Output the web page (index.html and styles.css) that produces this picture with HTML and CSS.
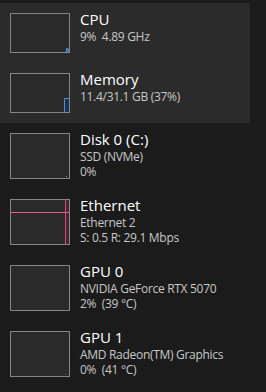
FILE: index.html
```html
<!DOCTYPE html>
<html>
<head>
<meta charset="utf-8">
<link rel="stylesheet" href="styles.css">
</head>
<body>
<div class="page">
  <div class="list">
    <div class="panel">
      <div class="row short">
        <div class="graph">
          <svg viewBox="0 0 58 38" width="58" height="38"><path d="M55 38 L56 34 L58 36 L58 38 Z" fill="#2a6fa8"/><path d="M55 38 L56 34 L58 36" fill="none" stroke="#4aa3e8" stroke-width="1"/></svg>
        </div>
        <div class="info">
          <div class="title">CPU</div>
          <div class="sub">9%&nbsp; 4.89 GHz</div>
        </div>
      </div>
      <div class="row short">
        <div class="graph">
          <svg viewBox="0 0 58 38" width="58" height="38"><rect x="53" y="24" width="5" height="14" fill="#1c3350"/><path d="M53.5 38 V24.5 H58" fill="none" stroke="#4b8fd6" stroke-width="1"/></svg>
        </div>
        <div class="info">
          <div class="title">Memory</div>
          <div class="sub">11.4/31.1 GB (37%)</div>
        </div>
      </div>
    </div>
    <div class="row">
      <div class="graph tall">
        <svg viewBox="0 0 58 44" width="58" height="44"><rect x="55" y="42" width="1" height="1" fill="#6aa83a"/></svg>
      </div>
      <div class="info">
        <div class="title">Disk 0 (C:)</div>
        <div class="sub">SSD (NVMe)</div>
        <div class="sub">0%</div>
      </div>
    </div>
    <div class="row">
      <div class="graph tall">
        <svg viewBox="0 0 58 44" width="58" height="44"><rect x="54" y="0" width="4" height="44" fill="#4a2236"/><line x1="54.5" y1="0" x2="54.5" y2="44" stroke="#d9487f" stroke-width="1"/><line x1="0" y1="12.5" x2="58" y2="12.5" stroke="#e85a8c" stroke-width="1"/></svg>
      </div>
      <div class="info">
        <div class="title">Ethernet</div>
        <div class="sub">Ethernet 2</div>
        <div class="sub">S: 0.5 R: 29.1 Mbps</div>
      </div>
    </div>
    <div class="row">
      <div class="graph tall"></div>
      <div class="info">
        <div class="title">GPU 0</div>
        <div class="sub">NVIDIA GeForce RTX 5070</div>
        <div class="sub">2%&nbsp; (39 °C)</div>
      </div>
    </div>
    <div class="row">
      <div class="graph tall">
        <svg viewBox="0 0 58 44" width="58" height="44"><rect x="54" y="42" width="1" height="1" fill="#8a5ab8"/></svg>
      </div>
      <div class="info">
        <div class="title">GPU 1</div>
        <div class="sub">AMD Radeon(TM) Graphics</div>
        <div class="sub">0%&nbsp; (41 °C)</div>
      </div>
    </div>
  </div>
</div>
</body>
</html>
```

FILE: styles.css
```css
html, body {
  margin: 0;
  padding: 0;
  background: #1b1b1b;
  width: 266px;
  height: 392px;
  overflow: hidden;
}
.page {
  padding-top: 3px;
  font-family: "Open Sans", "Noto Sans", sans-serif;
}
.list {
  width: 250px;
}
.panel {
  background: #2b2b2b;
}
.row {
  display: flex;
  gap: 10px;
  height: 66px;
  box-sizing: border-box;
  padding: 6px 0 0 10px;
}
.row.short {
  height: 60px;
}
.graph {
  width: 58px;
  height: 38px;
  margin-top: 4px;
  border: 1px solid #858585;
  background: #2a2a2a;
  flex: none;
}
.graph svg {
  display: block;
}
.graph.tall {
  height: 44px;
}
.info {
  display: flex;
  flex-direction: column;
}
.title {
  color: #ffffff;
  font-size: 15px;
  line-height: 20px;
}
.sub {
  color: #c8c8c8;
  font-size: 12px;
  line-height: 15px;
  letter-spacing: -0.3px;
}
```
